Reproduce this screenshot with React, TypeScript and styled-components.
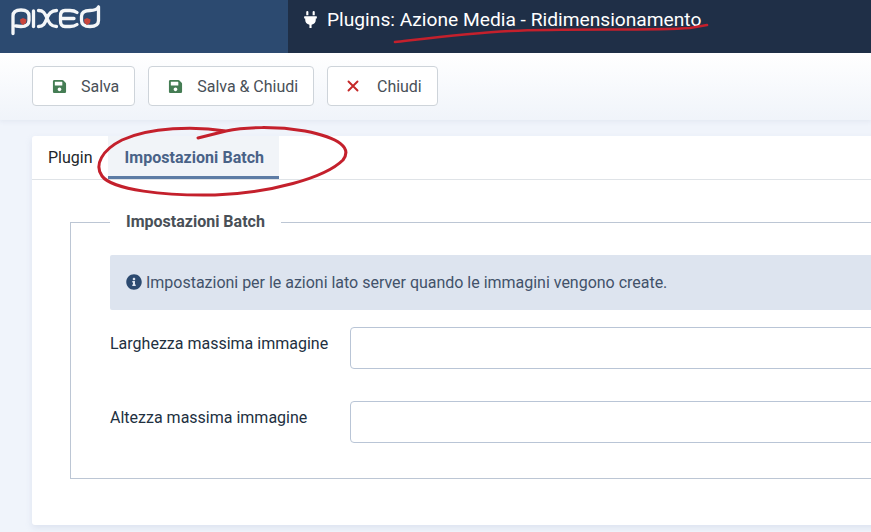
import React from "react";
import styled, { createGlobalStyle } from "styled-components";
import { FaInfoCircle, FaPlug, FaSave } from "react-icons/fa";

const Global = createGlobalStyle`
  html, body { margin: 0; padding: 0; width: 871px; height: 532px; overflow: hidden; background: #f0f4fb; }
  #root { width: 871px; height: 532px; overflow: hidden; }
  * { box-sizing: border-box; }
`;

const Page = styled.div`
  position: relative;
  width: 871px;
  height: 532px;
  overflow: hidden;
  font-family: Roboto, "Liberation Sans", sans-serif;
  font-size: 16px;
  color: #22262a;
  background: #f0f4fb;
`;

const Header = styled.header`
  display: flex;
  height: 53px;
`;

const Brand = styled.div`
  flex: 0 0 288px;
  background: #2c4a70;
  line-height: 0;
`;

const TitleBar = styled.div`
  flex: 1;
  display: flex;
  align-items: center;
  gap: 8px;
  padding: 0 0 14px 14px;
  background: #1f2f47;
  color: #fff;
  font-size: 19.2px;
`;

const Toolbar = styled.div`
  display: flex;
  gap: 13px;
  height: 67px;
  padding: 13px 32px 0;
  background: linear-gradient(180deg, #fff 0%, #f0f4fa 100%);
  box-shadow: 0 2px 4px rgba(180, 190, 210, 0.18);
`;

const ToolButton = styled.button<{ $gap: number }>`
  display: flex;
  align-items: center;
  gap: ${(p) => p.$gap}px;
  height: 40px;
  padding: 0 15px 0 19px;
  background: #fff;
  border: 1px solid #ced4da;
  border-radius: 4px;
  color: #495057;
  font: inherit;
  letter-spacing: -0.03px;
`;

const Card = styled.main`
  width: 1000px;
  height: 389px;
  margin: 16px 0 0 32px;
  background: #fff;
  border-radius: 3px 0 0 3px;
  box-shadow: 0 3px 6px rgba(180, 190, 215, 0.3);
`;

const Tabs = styled.nav`
  display: flex;
  height: 44px;
  padding-left: 16px;
  border-bottom: 1px solid #dfe3e7;
`;

const Tab = styled.div<{ $active?: boolean }>`
  display: flex;
  align-items: center;
  height: 43px;
  padding: ${(p) => (p.$active ? "3px 15px 0 17px" : "3px 15px 0 0")};
  background: ${(p) => (p.$active ? "#f1f4f8" : "transparent")};
  border-bottom: ${(p) => (p.$active ? "3px solid #5d7ca5" : "3px solid transparent")};
  color: ${(p) => (p.$active ? "#496287" : "#22262a")};
  font-weight: ${(p) => (p.$active ? 700 : 400)};
  letter-spacing: ${(p) => (p.$active ? "0.04px" : "0")};
`;

const Fields = styled.fieldset`
  width: 900px;
  height: 267px;
  margin: 32px 0 0 38px;
  padding: 23px 39px 0;
  border: 1px solid #bcc6d4;
  min-width: 0;
`;

const Legend = styled.legend`
  padding: 0 16px;
  height: 20px;
  line-height: 20px;
  color: #495057;
  font-weight: 700;
`;

const Notice = styled.div`
  display: flex;
  align-items: center;
  gap: 4px;
  height: 55px;
  padding: 0 0 1px 16px;
  background: #dde4ef;
  border-radius: 2px;
  color: #42526a;
  letter-spacing: -0.015px;
`;

const Row = styled.div<{ $top: number }>`
  display: flex;
  margin-top: ${(p) => p.$top}px;
`;

const Label = styled.label`
  flex: 0 0 240px;
  padding-top: 7px;
  color: #22303f;
`;

const Input = styled.input`
  width: 600px;
  height: 42px;
  background: #fff;
  border: 1px solid #b9c5d6;
  border-radius: 4px;
`;

const Ink = styled.svg`
  position: absolute;
  inset: 0;
  pointer-events: none;
`;

const CloseMark = () => (
  <svg width="12" height="12" viewBox="0 0 12 12" fill="none" stroke="#c52827" strokeWidth="1.9" strokeLinecap="round">
    <path d="M1.5 1.5 L10.5 10.5 M10.5 1.5 L1.5 10.5" />
  </svg>
);

const Logo = () => (
  <svg width="110" height="40" viewBox="0 0 110 40" fill="none" aria-label="pixed">
    <g stroke="#f4f6f8" strokeWidth="3.3" strokeLinecap="round" strokeLinejoin="round">
      <path d="M13 33.5 V16 C13 12 16 10 21 10 C26 10 29 12 29 16 V20.5 C29 24.5 26 26.5 21 26.5 L16 26" />
      <path d="M33.5 11 V26.5" />
      <path d="M38.5 10.5 C44 10.5 45 14 47 18 C49 23 51 26.5 56.5 26.5 M56.5 10.5 C51 10.5 49 14 47 18 C45 23 44 26.5 38.5 26.5" />
      <path d="M77 12.5 C75 11 73 10.5 70 10.5 H65 C62 10.5 60.5 12.5 60.5 16 V21 C60.5 24.5 62 26.5 65 26.5 H70 C73 26.5 75 26 77 24.5 M61 18.5 H74" />
      <path d="M98.5 7 V20.5 C98.5 24.5 95.5 26.5 90 26.5 C84.5 26.5 81.5 24.5 81.5 20.5 V16.5 C81.5 12.5 84.5 10.5 90 10.5 C94 10.5 97 9.5 98.5 7" />
    </g>
    <path d="M20 19.5 L23 18 L26.5 19.5 L26 23 L23 25 L20.5 23 Z" fill="#c9453c" />
    <path d="M84 19.5 L87 18 L90.5 19.5 L90 23 L87 25 L84.5 23 Z" fill="#c9453c" />
  </svg>
);

export default function App() {
  return (
    <Page>
      <Global />
      <Header>
        <Brand>
          <Logo />
        </Brand>
        <TitleBar>
          <FaPlug size={17} />
          <span>Plugins: Azione Media - Ridimensionamento</span>
        </TitleBar>
      </Header>
      <Toolbar>
        <ToolButton $gap={14}>
          <FaSave size={15} color="#457d54" />
          Salva
        </ToolButton>
        <ToolButton $gap={14}>
          <FaSave size={15} color="#457d54" />
          Salva &amp; Chiudi
        </ToolButton>
        <ToolButton $gap={18}>
          <CloseMark />
          Chiudi
        </ToolButton>
      </Toolbar>
      <Card>
        <Tabs>
          <Tab>Plugin</Tab>
          <Tab $active>Impostazioni Batch</Tab>
        </Tabs>
        <Fields>
          <Legend>Impostazioni Batch</Legend>
          <Notice>
            <FaInfoCircle size={16} color="#2c4a70" />
            Impostazioni per le azioni lato server quando le immagini vengono create.
          </Notice>
          <Row $top={17}>
            <Label>Larghezza massima immagine</Label>
            <Input />
          </Row>
          <Row $top={32}>
            <Label>Altezza massima immagine</Label>
            <Input />
          </Row>
        </Fields>
      </Card>
      <Ink width="871" height="532" viewBox="0 0 871 532" fill="none">
        <path
          d="M395 42 C430 38 470 33 510 31 C570 28 650 31 690 28 L707 25"
          stroke="#c4202c"
          strokeWidth="2.6"
          strokeLinecap="round"
        />
        <path
          d="M198 138 L226 131 C195 126 150 127 122 140 C102 150 94 165 102 176 C112 190 165 196 215 195 C270 193 325 178 343 160 C352 148 340 138 305 131 C275 126 245 127 226 131"
          stroke="#c4202c"
          strokeWidth="3"
          strokeLinecap="round"
          strokeLinejoin="round"
        />
      </Ink>
    </Page>
  );
}
